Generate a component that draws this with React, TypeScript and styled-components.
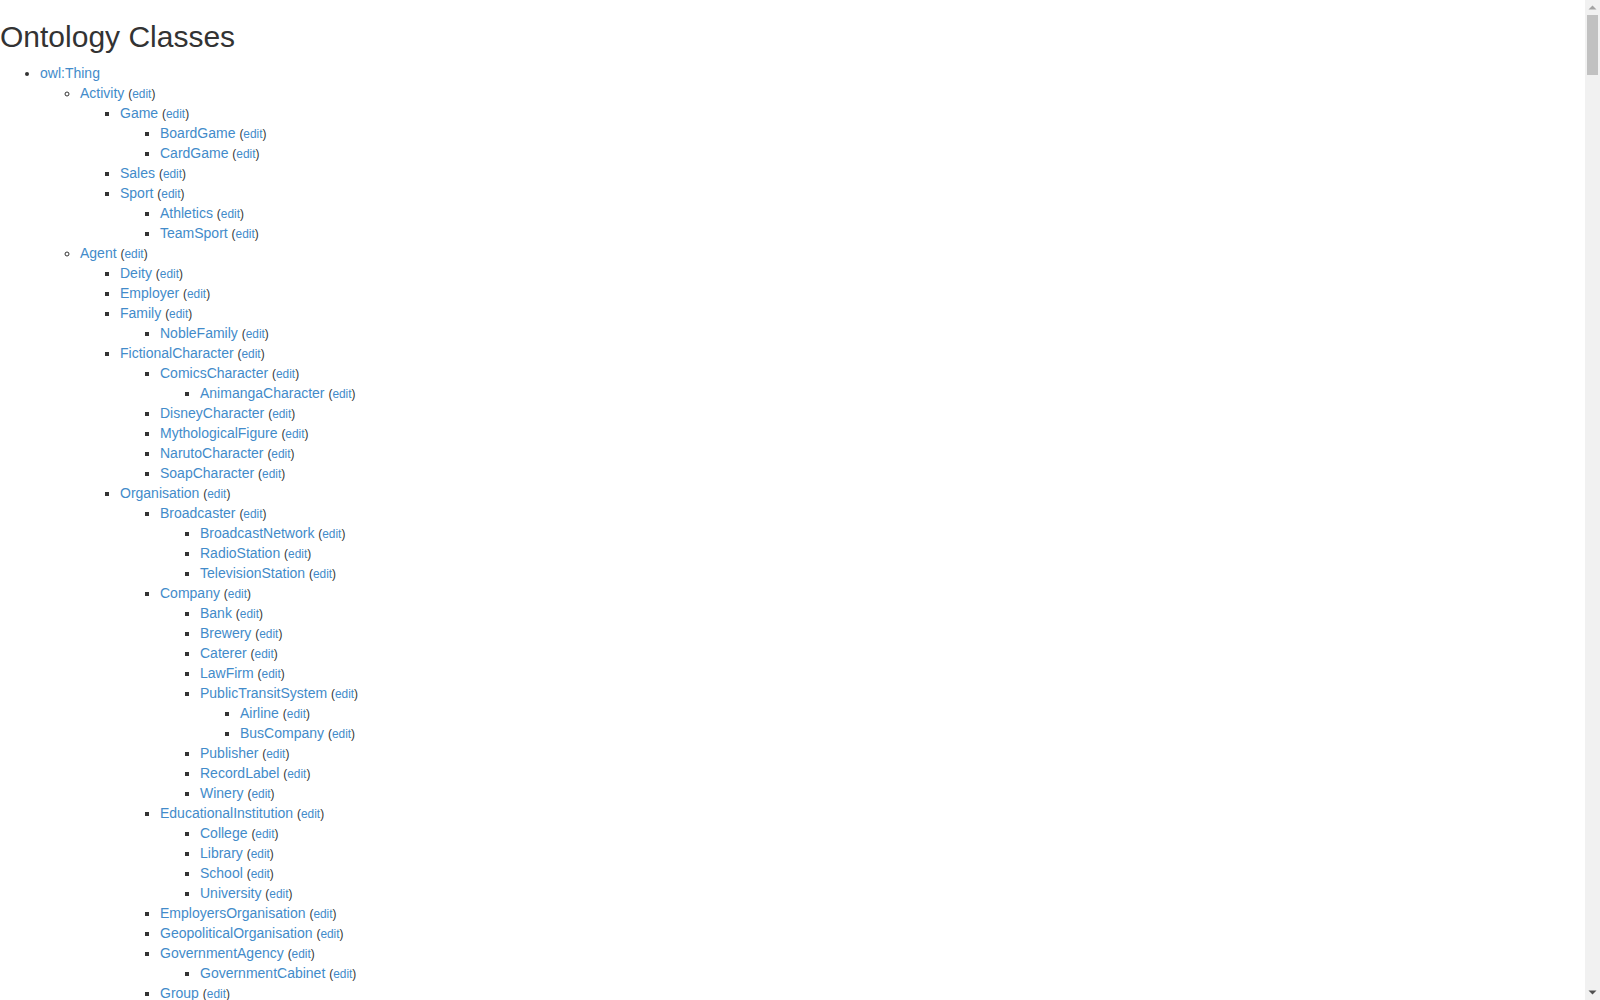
import React from 'react';
import styled, { createGlobalStyle } from 'styled-components';

// one space of indent per level below owl:Thing
const TREE = `
Activity
 Game
  BoardGame
  CardGame
 Sales
 Sport
  Athletics
  TeamSport
Agent
 Deity
 Employer
 Family
  NobleFamily
 FictionalCharacter
  ComicsCharacter
   AnimangaCharacter
  DisneyCharacter
  MythologicalFigure
  NarutoCharacter
  SoapCharacter
 Organisation
  Broadcaster
   BroadcastNetwork
   RadioStation
   TelevisionStation
  Company
   Bank
   Brewery
   Caterer
   LawFirm
   PublicTransitSystem
    Airline
    BusCompany
   Publisher
   RecordLabel
   Winery
  EducationalInstitution
   College
   Library
   School
   University
  EmployersOrganisation
  GeopoliticalOrganisation
  GovernmentAgency
   GovernmentCabinet
  Group
   Band
   ComedyGroup
  InternationalOrganisation
  Legislature
  MilitaryUnit
  NonProfitOrganisation
  Parliament
  PoliticalParty
  ReligiousOrganisation
  SambaSchool
  SportsClub
   HockeyClub
   RugbyClub
   SoccerClub
  SportsLeague
   AmericanFootballLeague
   AustralianFootballLeague
   AutoRacingLeague
   BaseballLeague
   BasketballLeague
   BowlingLeague
   BoxingLeague
   CanadianFootballLeague
   CricketLeague
   CurlingLeague
   CyclingLeague
   FieldHockeyLeague
   FormulaOneRacing
   GolfLeague
   HandballLeague
   IceHockeyLeague
   InlineHockeyLeague
   LacrosseLeague
   MixedMartialArtsLeague
   MotorcycleRacingLeague
   PaintballLeague
   PoloLeague
   RadioControlledRacingLeague
   RugbyLeague
   SoccerLeague
   SoftballLeague
   SpeedwayLeague
   TennisLeague
   VideogamesLeague
   VolleyballLeague
  SportsTeam
   AmericanFootballTeam
   AustralianFootballTeam
   BaseballTeam
   BasketballTeam
   CanadianFootballTeam
   CricketTeam
   CyclingTeam
   FormulaOneTeam
   HandballTeam
   HockeyTeam
   SpeedwayTeam
  TradeUnion
 Person
  Ambassador
  Archeologist
  Architect
  Aristocrat
  Artist
   Actor
    AdultActor
    VoiceActor
   Comedian
   ComicsCreator
   FashionDesigner
   MusicalArtist
    ClassicalMusicArtist
   Painter
   Photographer
   Sculptor
  Astronaut
  Athlete
   AmericanFootballPlayer
   AustralianRulesFootballPlayer
   BadmintonPlayer
   BaseballPlayer
   BasketballPlayer
   Bodybuilder
   Boxer
    AmateurBoxer
   BullFighter
   Canoeist
   ChessPlayer
   Cricketer
   Cyclist
   DartsPlayer
   Fencer
   GaelicGamesPlayer
   GolfPlayer
   GridironFootballPlayer
    CanadianFootballPlayer
   Gymnast
   HandballPlayer
   HorseRider
   IceHockeyPlayer
   Jockey
   LacrossePlayer
   MartialArtist
   MotorsportRacer
    MotorcycleRider
     SpeedwayRider
    RacingDriver
     FormulaOneRacer
     NascarDriver
   NetballPlayer
   PokerPlayer
   Rower
   RugbyPlayer
   Skater
    FigureSkater
    SpeedSkater
   Skier
   SnookerPlayer
    SnookerChamp
   SoccerPlayer
   SquashPlayer
   Surfer
   Swimmer
   TableTennisPlayer
   TennisPlayer
   VolleyballPlayer
   WaterPoloPlayer
   WinterSportPlayer
   Wrestler
  BeautyQueen
  BusinessPerson
  Celebrity
  Chef
  Cleric
   Cardinal
   ChristianBishop
   ChristianPatriarch
   Pope
   Priest
   Saint
  Coach
   AmericanFootballCoach
   CollegeCoach
   VolleyballCoach
  Criminal
   Murderer
    SerialKiller
  Economist
  Egyptologist
  Engineer
  Farmer
  HorseTrainer
  Journalist
  Judge
  Lawyer
  Linguist
  MemberResistanceMovement
  Model
  Monarch
  MovieDirector
  Noble
  OfficeHolder
  OrganisationMember
   SportsTeamMember
  Philosopher
  PlayboyPlaymate
  Politician
   Chancellor
   Congressman
   Deputy
   Governor
   Lieutenant
   Mayor
   MemberOfParliament
   President
   PrimeMinister
   Senator
   VicePresident
   VicePrimeMinister
  PoliticianSpouse
  Psychologist
  Religious
  Royalty
   BritishRoyalty
   Baronet
  Scientist
   Biologist
   Entomologist
   Medician
   Professor
  SportsManager
   SoccerManager
  TelevisionPersonality
   Host
    RadioHost
    TelevisionHost
  TheatreDirector
  Writer
   Historian
   MusicComposer
   Novelist
   Poet
   ScreenWriter
   SongWriter
Altitude
AnatomicalStructure
 Artery
 Bone
 Brain
 Embryology
 Lymph
 Muscle
 Nerve
 Vein
Award
 Decoration
 NobelPrize
Biomolecule
 Enzyme
 Gene
  HumanGene
  MouseGene
 Protein
Blazon
ChartsPlacements
ChemicalSubstance
 ChemicalCompound
 Mineral
Colour
Currency
Database
 BiologicalDatabase
Demographics
Depth
Device
 AutomobileEngine
 Camera
 Engine
 MobilePhone
 Weapon
Diploma
Disease
ElectionDiagram
EthnicGroup
Event
 Competition
  Contest
 LifeCycleEvent
  PersonalEvent
   Birth
   Death
 NaturalEvent
  Earthquake
  SolarEclipse
  StormSurge
 SocietalEvent
  Convention
  Election
  FilmFestival
  MilitaryConflict
  MusicFestival
  SpaceMission
  SportsEvent
   FootballMatch
   GrandPrix
   InternationalFootballLeagueEvent
   MixedMartialArtsEvent
   NationalFootballLeagueEvent
   Olympics
    OlympicEvent
   Race
    CyclingRace
    HorseRace
   Tournament
    GolfTournament
    SoccerTournament
    TennisTournament
    WomensTennisAssociationTournament
   WrestlingEvent
 YearInSpaceflight
Flag
Food
 Beverage
GeneLocation
GrossDomesticProduct
GrossDomesticProductPerCapita
Holiday
Identifier
Language
List
MeanOfTransportation
 Aircraft
 Automobile
 Locomotive
 MilitaryVehicle
 Motorcycle
 On-SiteTransportation
  ConveyorSystem
  Escalator
  MovingWalkway
 Rocket
 Ship
 SpaceShuttle
 SpaceStation
 Spacecraft
 Train
Media
MedicalSpecialty
Name
 GivenName
 Surname
PersonFunction
 Profession
Place
 ArchitecturalStructure
  AmusementParkAttraction
   RollerCoaster
   WaterRide
  Building
   Arena
   Castle
   Church
   HistoricBuilding
   Hospital
   Hotel
   House
   Museum
   Prison
   ReligiousBuilding
    Monastery
    Mosque
    Shrine
    Synagogue
    Temple
   Restaurant
   ShoppingMall
   Skyscraper
   Stadium
   Theatre
  Gate
  Infrastructure
   Airport
   Dam
   LaunchPad
   Lock
   PowerStation
    NuclearPowerStation
   RouteOfTransportation
    Bridge
    Road
    RoadJunction
    RailwayLine
    Tunnel
   Station
    RailwayStation
  MilitaryStructure
  Mill
   Watermill
   Windmill
  Monument
  Pyramid
  Tower
   Lighthouse
 Area
 CelestialBody
  Asteroid
  Galaxy
  Planet
  Satellite
  Star
 Cemetery
 HistoricPlace
 Mine
 NaturalPlace
  Cave
  Crater
  Glacier
  HotSpring
  MountainPass
  MountainRange
  Mountain
  Valley
  Volcano
  BodyOfWater
   Lake
   Sea
   Stream
    Canal
    River
 PopulatedPlace
  Continent
  Country
  Island
  Locality
  Region
   AdministrativeRegion
    ClericalAdministrativeRegion
     Diocese
   Province
  Settlement
   City
   Town
   Village
  State
  Territory
 ProtectedArea
 SiteOfSpecialScientificInterest
 SkiArea
 SportFacility
  CricketGround
  GolfCourse
  RaceTrack
   Racecourse
 WineRegion
 WorldHeritageSite
Species
 Archaea
 Bacteria
 Eukaryote
  Animal
   Amphibian
   Arachnid
   Bird
   Crustacean
   Fish
   Insect
   Mammal
    Horse
   Mollusca
   Reptile
  Fungus
  Plant
   ClubMoss
   Conifer
   Cycad
   Fern
   FloweringPlant
    Grape
   Ginkgo
   Gnetophytes
   GreenAlga
   Moss
SportCompetitionResult
TopicalConcept
 Genre
  MusicGenre
 Type
UnitOfWork
 Case
  LegalCase
   SupremeCourtOfTheUnitedStatesCase
Work
 Artwork
 Cartoon
  Anime
  HollywoodCartoon
 CollectionOfValuables
 Document
 Film
 Musical
 MusicalWork
  Album
  ArtistDiscography
  Opera
  Single
  Song
 Software
  VideoGame
 TelevisionEpisode
 TelevisionSeason
 TelevisionShow
 Website
 WrittenWork
  Book
  Comics
   Manga
  PeriodicalLiterature
   AcademicJournal
   Magazine
   Newspaper
  Play
  Poem
`;

type ClassNode = { name: string; children: ClassNode[] };

const parseTree = (source: string): ClassNode[] => {
  const roots: ClassNode[] = [];
  const stack: ClassNode[][] = [roots];
  source
    .split('\n')
    .filter((line) => line.trim() !== '')
    .forEach((line) => {
      const depth = line.length - line.trimStart().length;
      const node: ClassNode = { name: line.trim(), children: [] };
      stack.length = depth + 1;
      stack[depth].push(node);
      stack[depth + 1] = node.children;
    });
  return roots;
};

const classes = parseTree(TREE);

const markerFor = (depth: number) =>
  depth === 0 ? 'disc' : depth === 1 ? 'circle' : 'square';

const ClassList = ({ nodes, depth }: { nodes: ClassNode[]; depth: number }) => (
  <Tree $marker={markerFor(depth)}>
    {nodes.map((node) => (
      <Item key={node.name}>
        <ClassLink href={`#${node.name}`}>{node.name}</ClassLink>{' '}
        <EditNote>
          (<EditLink href={`#edit-${node.name}`}>edit</EditLink>)
        </EditNote>
        {node.children.length > 0 && (
          <ClassList nodes={node.children} depth={depth + 1} />
        )}
      </Item>
    ))}
  </Tree>
);

// classic window scrollbar drawn at the right edge, page scrolled to the top
const ScrollBar = () => (
  <Rail aria-hidden>
    <ArrowButton>
      <svg width='15' height='15' viewBox='0 0 15 15'>
        <polygon points='3.5,9.5 7.5,5.5 11.5,9.5' fill='#a3a3a3' />
      </svg>
    </ArrowButton>
    <Track>
      <Thumb />
    </Track>
    <ArrowButton>
      <svg width='15' height='15' viewBox='0 0 15 15'>
        <polygon points='3.5,5.5 11.5,5.5 7.5,9.5' fill='#505050' />
      </svg>
    </ArrowButton>
  </Rail>
);

const App = () => {
  return (
    <>
      <GlobalStyle />
      <Page>
        <Title>Ontology Classes</Title>
        <Tree $marker='disc'>
          <Item>
            <ClassLink href='#owl:Thing'>owl:Thing</ClassLink>
            <ClassList nodes={classes} depth={1} />
          </Item>
        </Tree>
      </Page>
      <ScrollBar />
    </>
  );
};
export default App;

const GlobalStyle = createGlobalStyle`
  html {
    background: #fff;
  }
  body {
    margin: 0;
    font-family: 'Liberation Sans', Arial, Helvetica, sans-serif;
    font-size: 14px;
    line-height: 20px;
    color: #333;
  }
`;

const Page = styled.div`
  padding-right: 15px;
`;

const Title = styled.h1`
  margin: 20px 0 10px;
  font-family: inherit;
  font-size: 30px;
  font-weight: 500;
  line-height: 1.1;
  color: #333;
`;

const Tree = styled.ul<{ $marker: string }>`
  margin: 0;
  padding-left: 40px;
  list-style-type: ${(p) => p.$marker};
`;

const Item = styled.li`
  line-height: 20px;
`;

const ClassLink = styled.a`
  color: #428bca;
  text-decoration: none;
`;

const EditNote = styled.small`
  font-size: 85%;
  line-height: 1;
  color: #333;
`;

const EditLink = styled.a`
  color: #428bca;
  text-decoration: none;
`;

const Rail = styled.div`
  position: fixed;
  top: 0;
  right: 0;
  width: 15px;
  height: 100vh;
  display: flex;
  flex-direction: column;
  background: #f1f1f1;
`;

const ArrowButton = styled.div`
  flex: 0 0 15px;
  height: 15px;

  svg {
    display: block;
  }
`;

const Track = styled.div`
  flex: 1;
  padding: 0 2px;
`;

const Thumb = styled.div`
  height: 60px;
  background: #c1c1c1;
`;
